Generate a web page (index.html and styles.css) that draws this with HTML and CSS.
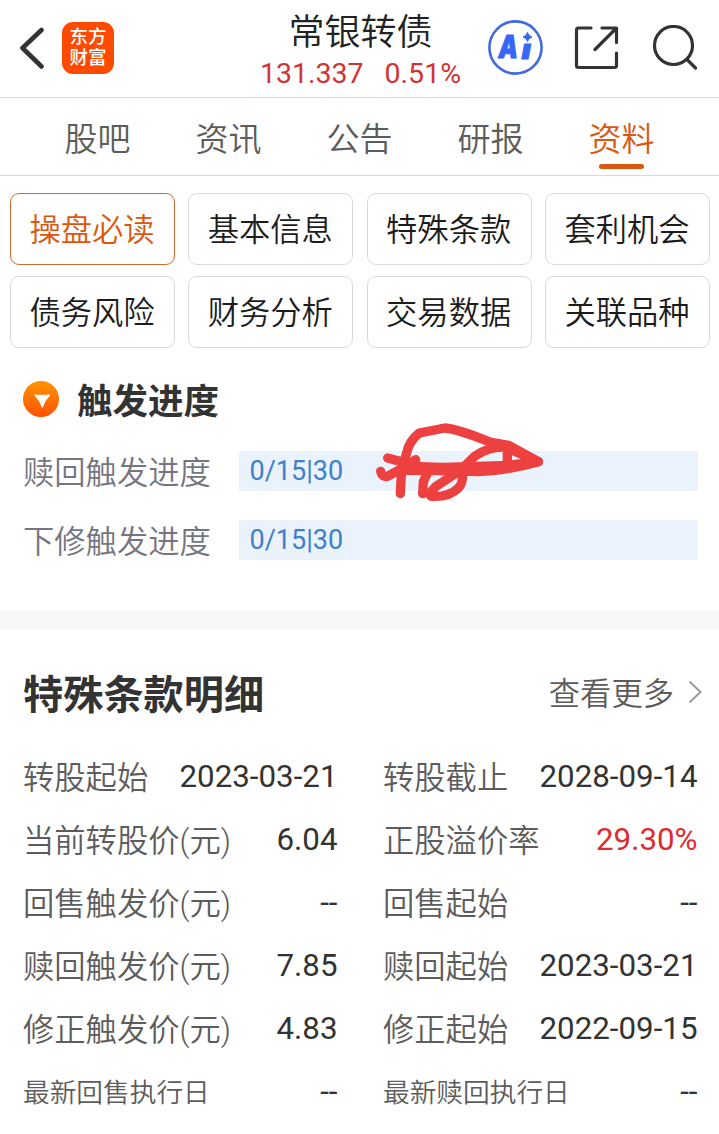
FILE: index.html
```html
<!DOCTYPE html>
<html lang="zh-CN">
<head>
    <meta charset="UTF-8">
    <meta name="viewport" content="width=device-width, initial-scale=1.0">
    <title>常银转债</title>
    <link rel="stylesheet" href="styles.css">
</head>
<body>
    <header class="header">
        <div class="header-left">
            <svg class="back" width="26" height="44" viewBox="0 0 26 44">
                <path d="M23.500 4 L4.500 22 L23.500 40.500" fill="none" stroke="#333" stroke-width="4.600" stroke-linecap="round" stroke-linejoin="round"/>
            </svg>
            <div class="logo"><span>东方</span><span>财富</span></div>
        </div>
        <div class="quote">
            <h1>常银转债</h1>
            <p><span>131.337</span><span>0.51%</span></p>
        </div>
        <div class="header-right">
            <svg width="56" height="56" viewBox="0 0 56 56">
                <circle cx="28.500" cy="27.500" r="26.100" fill="none" stroke="#4169e1" stroke-width="2.600"/>
                <text class="ai-text" transform="translate(11.500 37.500) scale(0.760 1)">A</text>
                <text class="ai-text" transform="translate(34.500 38.500) scale(1 0.850)">ı</text>
                <path d="M40.500 12.500 Q41.500 16 45 17 Q41.500 18 40.500 21.500 Q39.500 18 36 17 Q39.500 16 40.500 12.500Z" fill="#3566f6" stroke="#3566f6"/>
            </svg>
            <svg width="46" height="46" viewBox="0 0 46 46">
                <g fill="none" stroke="#333" stroke-width="3.200" stroke-linecap="round" stroke-linejoin="round">
                    <path d="M18 3 H5.500 Q3.500 3 3.500 5 V40.500 Q3.500 42.500 5.500 42.500 H41.500 Q43.500 42.500 43.500 40.500 V28"/>
                    <path d="M29 3 H43.500 V17.500 M42.500 4 L22 24.500"/>
                </g>
            </svg>
            <svg width="46" height="46" viewBox="0 0 46 46">
                <g fill="none" stroke="#333" stroke-width="3.200" stroke-linecap="round">
                    <circle cx="21.500" cy="20.500" r="19"/>
                    <path d="M35 34.500 L43.500 43"/>
                </g>
            </svg>
        </div>
    </header>

    <nav class="tabs">
        <a>股吧</a>
        <a>资讯</a>
        <a>公告</a>
        <a>研报</a>
        <a class="active">资料</a>
    </nav>

    <div class="chips">
        <button class="active">操盘必读</button>
        <button>基本信息</button>
        <button>特殊条款</button>
        <button>套利机会</button>
        <button>债务风险</button>
        <button>财务分析</button>
        <button>交易数据</button>
        <button>关联品种</button>
    </div>

    <section class="progress">
        <h2>
            <svg width="36" height="36" viewBox="0 0 36 36">
                <defs>
                    <linearGradient id="orange" x1="0" y1="0" x2="0" y2="1">
                        <stop offset="0" stop-color="#ff9500"/>
                        <stop offset="1" stop-color="#ff5000"/>
                    </linearGradient>
                </defs>
                <circle cx="18" cy="18" r="18" fill="url(#orange)"/>
                <path d="M12 14 Q19 14.500 26.500 14 Q21.500 19 19.300 26 Q17 19 12 14Z" fill="#fff" stroke="#fff" stroke-width="1.200" stroke-linejoin="round"/>
            </svg>
            <span>触发进度</span>
        </h2>
        <div class="progress-row">
            <span>赎回触发进度</span>
            <div class="bar">0/15|30</div>
        </div>
        <div class="progress-row">
            <span>下修触发进度</span>
            <div class="bar">0/15|30</div>
        </div>
        <!-- hand-drawn mark over the first bar -->
        <svg class="scribble" width="200" height="100" viewBox="0 0 600 300">
            <g fill="none" stroke="#ed4041" stroke-width="28" stroke-linecap="round" stroke-linejoin="round">
                <path d="M121 251 L124 190 L140 128 Q148 92 178 69 L255 54 Q292 57 390 96 L446 106 L535 155"/>
                <path d="M83 144 L130 157 L185 170 L245 172 L330 170 L440 166 L535 155 L450 118"/>
                <path d="M62 184 Q65 202 82 199 L118 180 L167 149"/>
                <path d="M535 155 Q440 182 355 185 L240 182 L130 181"/>
                <path d="M130 168 L220 178 L340 178 L440 172"/>
                <path d="M188 251 L190 215 L205 183"/>
                <path d="M442 162 L442 112 Q390 107 345 138 L300 182 L228 229 Q202 253 214 259 Q268 262 296 233 Q310 218 308 185"/>
            </g>
        </svg>
    </section>

    <section class="terms">
        <div class="terms-head">
            <h2>特殊条款明细</h2>
            <a class="more"><span>查看更多</span>
                <svg width="14" height="24" viewBox="0 0 14 24">
                    <path d="M1.500 1.500 L12.500 12 L1.500 22.500" fill="none" stroke="#999" stroke-width="2"/>
                </svg>
            </a>
        </div>
        <div class="terms-grid">
            <div class="item"><span>转股起始</span><b>2023-03-21</b></div>
            <div class="item"><span>转股截止</span><b>2028-09-14</b></div>
            <div class="item"><span>当前转股价(元)</span><b>6.04</b></div>
            <div class="item"><span>正股溢价率</span><b class="red">29.30%</b></div>
            <div class="item"><span>回售触发价(元)</span><b>--</b></div>
            <div class="item"><span>回售起始</span><b>--</b></div>
            <div class="item"><span>赎回触发价(元)</span><b>7.85</b></div>
            <div class="item"><span>赎回起始</span><b>2023-03-21</b></div>
            <div class="item"><span>修正触发价(元)</span><b>4.83</b></div>
            <div class="item"><span>修正起始</span><b>2022-09-15</b></div>
            <div class="item"><span class="small">最新回售执行日</span><b>--</b></div>
            <div class="item"><span class="small">最新赎回执行日</span><b>--</b></div>
        </div>
    </section>
</body>
</html>
```
FILE: styles.css
```css
* {
    box-sizing: border-box;
    margin: 0;
    padding: 0;
}
body {
    font-family: Roboto, 'Noto Sans CJK SC', sans-serif;
    font-weight: 350;
    background-color: #fff;
    color: #333;
    overflow: hidden;
}
svg {
    display: block;
    flex: none;
}
.header {
    display: grid;
    grid-template-columns: 240px 241px 1fr;
    height: 98px;
    border-bottom: 1px solid #d8d8d8;
}
.header-left {
    display: flex;
    align-items: center;
    padding-left: 18px;
    gap: 18px;
    height: 95px;
}
.logo {
    display: flex;
    flex-direction: column;
    justify-content: center;
    align-items: center;
    width: 52px;
    height: 52px;
    border-radius: 11px;
    background-color: #ff4a00;
    color: #fff;
    font-size: 18.5px;
    font-weight: 500;
    line-height: 21px;
}
.quote {
    text-align: center;
}
.quote h1 {
    height: 54px;
    padding-top: 10px;
    font-size: 36px;
    font-weight: 350;
    line-height: 46px;
    color: #222;
}
.quote p {
    display: flex;
    justify-content: center;
    gap: 21px;
    font-size: 28.5px;
    font-weight: 400;
    line-height: 39px;
    color: #d03434;
}
.header-right {
    display: flex;
    align-items: center;
    height: 95px;
    padding-left: 6px;
    gap: 30px;
}
.header-right svg + svg + svg {
    margin-left: 3px;
}
.ai-text {
    font-family: Inter, sans-serif;
    font-size: 32px;
    font-weight: 900;
    font-style: italic;
    fill: #3566f6;
    stroke: #3566f6;
    stroke-width: 1;
}
.tabs {
    display: flex;
    height: 78px;
    padding: 0 32px;
    border-bottom: 1px solid #d8d8d8;
}
.tabs a {
    display: flex;
    flex-direction: column;
    align-items: center;
    flex: 1;
    padding-top: 17px;
    font-size: 33px;
    line-height: 49px;
    color: #5c5c5c;
}
.tabs .active {
    color: #dd560d;
}
.tabs .active::after {
    content: '';
    width: 45px;
    height: 5px;
    border-radius: 3px;
    background-color: #dd560d;
}
.chips {
    display: grid;
    grid-template-columns: repeat(4, 165px);
    justify-content: space-between;
    row-gap: 11px;
    padding: 17px 9px 0 10px;
}
.chips button {
    height: 72px;
    padding: 0 1px 4px 0;
    border: 1px solid #d8dada;
    border-radius: 9px;
    background-color: #fff;
    color: #1c1c1c;
    font: inherit;
    font-size: 31.3px;
}
.chips .active {
    border-color: #cf6a30;
    color: #dd560d;
}
.progress {
    position: relative;
    height: 281px;
    padding: 26px 21px 0 23px;
    border-bottom: 18px solid #f7f8fa;
}
.progress h2 {
    display: flex;
    align-items: center;
    gap: 18px;
    height: 50px;
    margin-bottom: 27px;
    font-size: 35.5px;
    font-weight: bold;
}
.progress h2 span {
    padding-bottom: 1px;
}
.progress-row {
    display: flex;
    justify-content: space-between;
    align-items: center;
    height: 40px;
    margin-bottom: 29px;
    font-size: 31.3px;
    color: #75757f;
}
.progress-row span {
    padding-bottom: 1px;
}
.bar {
    width: 459px;
    height: 40px;
    padding-left: 10.5px;
    background-color: #eaf2fc;
    color: #3d80cc;
    font-size: 27px;
    font-weight: 400;
    line-height: 40px;
}
.scribble {
    position: absolute;
    left: 360px;
    top: 62px;
}
.terms {
    padding: 34px 21px 0 23px;
}
.terms-head {
    display: flex;
    justify-content: space-between;
    align-items: center;
    height: 58px;
    margin-bottom: 24px;
}
.terms-head h2 {
    padding-bottom: 1px;
    font-size: 40.2px;
    font-weight: bold;
}
.more {
    display: flex;
    align-items: center;
    gap: 14px;
    margin-right: -4px;
    font-size: 31.3px;
    color: #5c5c5c;
}
.more span {
    padding-bottom: 2px;
}
.terms-grid {
    display: grid;
    grid-template-columns: 314.5px 314.5px;
    justify-content: space-between;
    grid-auto-rows: 63px;
    margin-right: 0.5px;
}
.item {
    display: flex;
    justify-content: space-between;
    align-items: center;
    font-size: 31.3px;
    color: #5c5c5c;
}
.item span {
    padding-bottom: 2px;
}
.item b {
    font-weight: 400;
    color: #333;
}
.item .red {
    color: #de2b2f;
}
.item .small {
    font-size: 26.7px;
}
```
